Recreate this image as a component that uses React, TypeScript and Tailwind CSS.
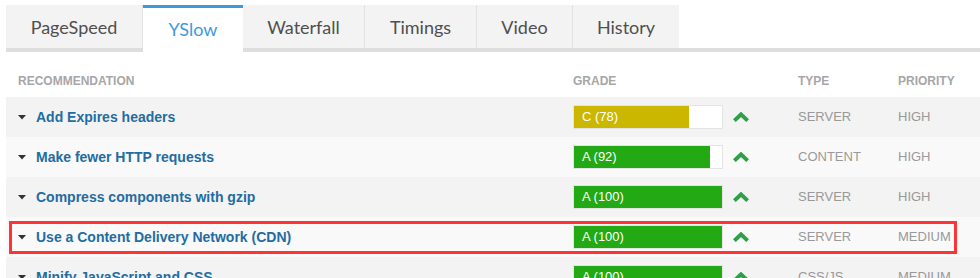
import React from "react";

const tabs = [
  { label: "PageSpeed", w: "w-[137px]" },
  { label: "YSlow", w: "w-[100px]" },
  { label: "Waterfall", w: "w-[122px]" },
  { label: "Timings", w: "w-[112px]" },
  { label: "Video", w: "w-[96px]" },
  { label: "History", w: "w-[106px]" },
];

type Row = { title: string; grade: string; pct: number; color: string; type: string; priority: string; bg: string };

const rows: Row[] = [
  { title: "Add Expires headers", grade: "C (78)", pct: 78, color: "bg-[#cbb700]", type: "SERVER", priority: "HIGH", bg: "bg-[#f3f3f3]" },
  { title: "Make fewer HTTP requests", grade: "A (92)", pct: 92, color: "bg-[#23a914]", type: "CONTENT", priority: "HIGH", bg: "bg-[#f9f9f9]" },
  { title: "Compress components with gzip", grade: "A (100)", pct: 100, color: "bg-[#23a914]", type: "SERVER", priority: "HIGH", bg: "bg-[#f3f3f3]" },
  { title: "Use a Content Delivery Network (CDN)", grade: "A (100)", pct: 100, color: "bg-[#23a914]", type: "SERVER", priority: "MEDIUM", bg: "bg-[#f9f9f9]" },
  { title: "Minify JavaScript and CSS", grade: "A (100)", pct: 100, color: "bg-[#23a914]", type: "CSS/JS", priority: "MEDIUM", bg: "bg-[#f3f3f3]" },
];

function Chevron() {
  return (
    <svg width="16" height="10" viewBox="0 0 16 10" className="block">
      <path d="M1.4 8.6 L8 2.4 L14.6 8.6" fill="none" stroke="#2e9e47" strokeWidth="4" strokeLinejoin="miter" />
    </svg>
  );
}

export default function App() {
  return (
    <div className="w-[980px] h-[278px] overflow-hidden bg-white pl-[6px] pt-[5px]" style={{ fontFamily: '"Liberation Sans", Arial, sans-serif' }}>
      {/* Tabs */}
      <div className="flex h-[47px] border-b-4 border-[#dedede]">
        {tabs.map((t, i) => {
          const active = t.label === "YSlow";
          return (
            <div
              key={t.label}
              className={
                active
                  ? `relative z-10 -mb-[4px] flex h-[47px] ${t.w} items-center justify-center bg-white border-t-[3px] border-[#3b9ad9] pb-[2px] text-[18px] text-[#3b9ad9]`
                  : `flex h-[43px] ${t.w} items-center justify-center bg-[#f3f3f3] pt-[1px] text-[18px] text-[#4f4f4f] ${i < tabs.length - 1 ? "border-r border-[#e2e2e2]" : ""}`
              }
              style={{ fontFamily: '"Lato", "Open Sans", sans-serif' }}
            >
              {t.label}
            </div>
          );
        })}
      </div>

      {/* Header */}
      <div className="grid h-[45px] grid-cols-[567px_225px_100px_1fr] pt-[22px] text-[12px] font-bold leading-[15px] text-[#a6a6a6]">
        <div className="pl-[12px]">RECOMMENDATION</div>
        <div>GRADE</div>
        <div>TYPE</div>
        <div>PRIORITY</div>
      </div>

      {/* Rows */}
      <div className="relative">
        {rows.map((r) => (
          <div key={r.title} className={`grid h-[40px] grid-cols-[567px_225px_100px_1fr] items-center ${r.bg}`}>
            <div className="flex items-center pl-[12px]">
              <svg width="8" height="5" viewBox="0 0 8 5" className="mr-[10px] block">
                <path d="M0 0 L8 0 L4 4.5 Z" fill="#333" />
              </svg>
              <span className="text-[14px] font-bold text-[#236ca1]">{r.title}</span>
            </div>
            <div className="flex items-center">
              <div className="h-[24px] w-[150px] border border-[#e4e4e4] bg-white">
                <div className={`flex h-full items-center pl-[8px] text-[13px] text-white ${r.color}`} style={{ width: `${r.pct}%` }}>
                  {r.grade}
                </div>
              </div>
              <div className="ml-[10px]">
                <Chevron />
              </div>
            </div>
            <div className="text-[13px] text-[#999]">{r.type}</div>
            <div className="text-[13px] text-[#999]">{r.priority}</div>
          </div>
        ))}
        <div className="pointer-events-none absolute left-[3px] top-[124px] h-[33px] w-[948px] border-[3px] border-[#f33]" />
      </div>
    </div>
  );
}
